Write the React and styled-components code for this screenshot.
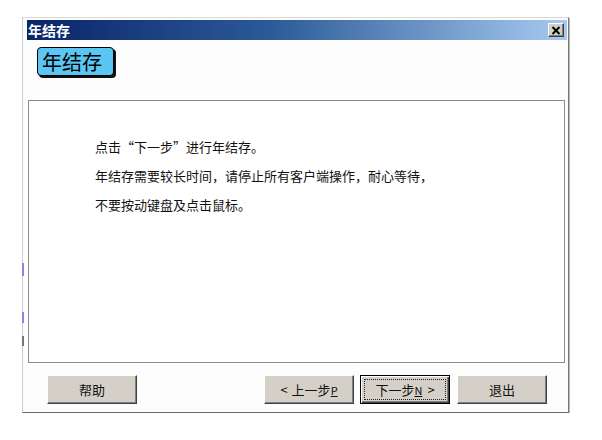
import React from "react";
import styled, { createGlobalStyle } from "styled-components";

const FONT = `"Noto Sans CJK SC", "Liberation Sans", sans-serif`;

const GlobalStyle = createGlobalStyle`
  html, body {
    margin: 0;
    padding: 0;
    background: #ffffff;
  }
  body {
    font-family: ${FONT};
    font-size: 13px;
    color: #000;
  }
`;

const Window = styled.div`
  position: relative;
  box-sizing: border-box;
  width: 547px;
  height: 396px;
  margin: 17px 0 0 22px;
  padding: 2px 1px 0 4px;
  background: #fdfdfd;
  border: 1px solid;
  border-color: #d8d8d8 #7a7a7a #6a6a6a #cfcfcf;
  box-shadow: 1px 1px 0 #b8b8b8;
  display: flex;
  flex-direction: column;
`;

const TitleBar = styled.div`
  height: 20px;
  display: flex;
  align-items: center;
  justify-content: space-between;
  padding: 0 3px 0 1px;
  background: linear-gradient(to right, #0a246a 0%, #2c5a98 45%, #a6caf0 100%);
`;

const TitleText = styled.span`
  color: #fff;
  font-weight: bold;
  font-size: 14px;
`;

const CloseButton = styled.div`
  box-sizing: border-box;
  width: 16px;
  height: 14px;
  display: flex;
  align-items: center;
  justify-content: center;
  background: #d4d0c8;
  border: 1px solid;
  border-color: #fff #404040 #404040 #fff;
  box-shadow: inset -1px -1px 0 #808080;
`;

const Header = styled.div`
  height: 60px;
  padding: 7px 0 0 10px;
  box-sizing: border-box;
`;

const Badge = styled.div`
  box-sizing: border-box;
  width: 77px;
  height: 29px;
  display: flex;
  align-items: center;
  padding-left: 4px;
  background: #5cc6f2;
  border: 1px solid #000;
  border-radius: 4px;
  box-shadow: 2px 2px 0 #111;
  font-size: 20px;
  font-weight: 400;
  line-height: 1;
`;

const Panel = styled.div`
  box-sizing: border-box;
  height: 263px;
  margin: 0 2px 0 1px;
  padding: 31px 0 0 66px;
  background: #fff;
  border: 1px solid #8c8c8c;
`;

const Line = styled.p`
  margin: 0;
  font-size: 13px;
  line-height: 29px;
  color: #111;
`;

const Quote = styled.span`
  display: inline-block;
  width: 13px;
  text-align: ${(p) => (p.$open ? "right" : "left")};
`;

const ButtonRow = styled.div`
  display: flex;
  align-items: center;
  margin-top: 12px;
  padding: 0 20px;
`;

const Spacer = styled.div`
  flex: 1;
`;

const Button = styled.div`
  box-sizing: border-box;
  width: 90px;
  height: 29px;
  margin-left: ${(p) => p.$gap || 0}px;
  display: flex;
  align-items: center;
  justify-content: center;
  background: #d4d0c8;
  font-size: 13px;
  color: #111;
  border: 1px solid;
  border-color: ${(p) =>
    p.$default ? "#000" : "#ffffff #404040 #404040 #ffffff"};
  box-shadow: ${(p) =>
    p.$default
      ? "inset 1px 1px 0 #fff, inset -1px -1px 0 #404040, inset -2px -2px 0 #808080"
      : "inset -1px -1px 0 #808080"};
`;

const FocusRing = styled.span`
  box-sizing: border-box;
  display: flex;
  align-items: center;
  justify-content: center;
  width: 82px;
  height: 21px;
  border: 1px dotted #222;
`;

const Arrow = styled.span`
  margin: ${(p) => (p.$left ? "0 4px 0 0" : "0 0 0 5px")};
`;

const Key = styled.span`
  text-decoration: underline;
  font-size: 11px;
`;

const EdgeMark = styled.span`
  position: absolute;
  left: -1px;
  top: ${(p) => p.$top}px;
  width: 2px;
  height: ${(p) => p.$h}px;
  background: ${(p) => p.$color};
`;

export default function App() {
  return (
    <>
      <GlobalStyle />
      <Window>
        <EdgeMark $top={245} $h={13} $color="#9a7cf0" />
        <EdgeMark $top={294} $h={11} $color="#9a7cf0" />
        <EdgeMark $top={318} $h={10} $color="#777" />
        <TitleBar>
          <TitleText>年结存</TitleText>
          <CloseButton>
            <svg width="10" height="9" viewBox="0 0 10 9">
              <path d="M1.5 1 L8.5 8 M8.5 1 L1.5 8" stroke="#000" strokeWidth="2" />
            </svg>
          </CloseButton>
        </TitleBar>
        <Header>
          <Badge>年结存</Badge>
        </Header>
        <Panel>
          <Line>
            点击<Quote $open>“</Quote>下一步<Quote>”</Quote>进行年结存。
          </Line>
          <Line>年结存需要较长时间，请停止所有客户端操作，耐心等待，</Line>
          <Line>不要按动键盘及点击鼠标。</Line>
        </Panel>
        <ButtonRow>
          <Button>帮助</Button>
          <Spacer />
          <Button>
            <Arrow $left>&lt;</Arrow>上一步<Key>P</Key>
          </Button>
          <Button $gap={6} $default>
            <FocusRing>
              下一步<Key>N</Key>
              <Arrow>&gt;</Arrow>
            </FocusRing>
          </Button>
          <Button $gap={7}>退出</Button>
        </ButtonRow>
      </Window>
    </>
  );
}
